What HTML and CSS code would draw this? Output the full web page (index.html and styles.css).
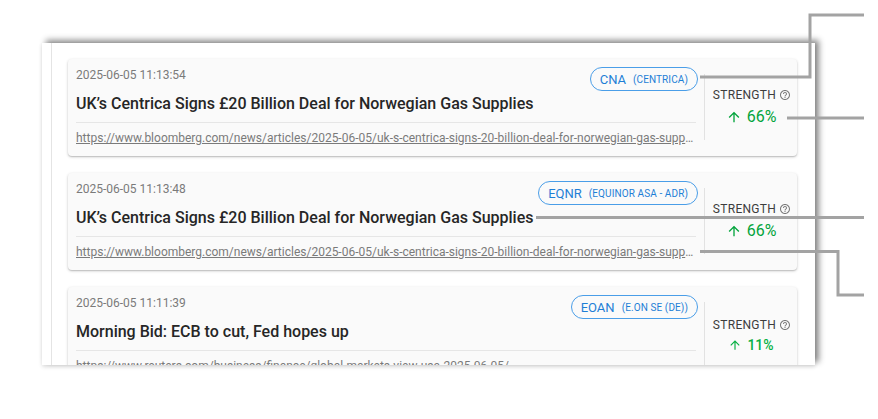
FILE: index.html
```html
<!DOCTYPE html>
<html>
<head>
<meta charset="utf-8">
<link rel="stylesheet" href="styles.css">
</head>
<body>
<div class="panel">
  <div class="list">
    <div class="card">
      <div class="main">
        <div class="head">
          <span class="date">2025-06-05 11:13:54</span>
          <span class="chip"><span class="sym">CNA</span><span class="name">(CENTRICA)</span></span>
        </div>
        <div class="title">UK’s Centrica Signs £20 Billion Deal for Norwegian Gas Supplies</div>
        <div class="url"><a href="#">https://www.bloomberg.com/news/articles/2025-06-05/uk-s-centrica-signs-20-billion-deal-for-norwegian-gas-supplies</a></div>
      </div>
      <div class="strength">
        <div class="label">STRENGTH <svg class="help" viewBox="0 0 24 24"><path d="M11 18h2v-2h-2v2zm1-16C6.48 2 2 6.48 2 12s4.48 10 10 10 10-4.48 10-10S17.52 2 12 2zm0 18c-4.41 0-8-3.59-8-8s3.59-8 8-8 8 3.59 8 8-3.59 8-8 8zm0-14c-2.21 0-4 1.79-4 4h2c0-1.1.9-2 2-2s2 .9 2 2c0 2-3 1.75-3 5h2c0-2.25 3-2.5 3-5 0-2.21-1.79-4-4-4z"/></svg></div>
        <div class="value big"><svg class="arrow" viewBox="0 0 24 24"><path d="M4 12l1.41 1.41L11 7.83V20h2V7.83l5.58 5.59L20 12l-8-8-8 8z"/></svg>66%</div>
      </div>
    </div>
    <div class="card">
      <div class="main">
        <div class="head">
          <span class="date">2025-06-05 11:13:48</span>
          <span class="chip"><span class="sym">EQNR</span><span class="name">(EQUINOR ASA - ADR)</span></span>
        </div>
        <div class="title">UK’s Centrica Signs £20 Billion Deal for Norwegian Gas Supplies</div>
        <div class="url"><a href="#">https://www.bloomberg.com/news/articles/2025-06-05/uk-s-centrica-signs-20-billion-deal-for-norwegian-gas-supplies</a></div>
      </div>
      <div class="strength">
        <div class="label">STRENGTH <svg class="help" viewBox="0 0 24 24"><path d="M11 18h2v-2h-2v2zm1-16C6.48 2 2 6.48 2 12s4.48 10 10 10 10-4.48 10-10S17.52 2 12 2zm0 18c-4.41 0-8-3.59-8-8s3.59-8 8-8 8 3.59 8 8-3.59 8-8 8zm0-14c-2.21 0-4 1.79-4 4h2c0-1.1.9-2 2-2s2 .9 2 2c0 2-3 1.75-3 5h2c0-2.25 3-2.5 3-5 0-2.21-1.79-4-4-4z"/></svg></div>
        <div class="value big"><svg class="arrow" viewBox="0 0 24 24"><path d="M4 12l1.41 1.41L11 7.83V20h2V7.83l5.58 5.59L20 12l-8-8-8 8z"/></svg>66%</div>
      </div>
    </div>
    <div class="card">
      <div class="main">
        <div class="head">
          <span class="date">2025-06-05 11:11:39</span>
          <span class="chip"><span class="sym">EOAN</span><span class="name">(E.ON SE (DE))</span></span>
        </div>
        <div class="title">Morning Bid: ECB to cut, Fed hopes up</div>
        <div class="url"><a href="#">https://www.reuters.com/business/finance/global-markets-view-usa-2025-06-05/</a></div>
      </div>
      <div class="strength">
        <div class="label">STRENGTH <svg class="help" viewBox="0 0 24 24"><path d="M11 18h2v-2h-2v2zm1-16C6.48 2 2 6.48 2 12s4.48 10 10 10 10-4.48 10-10S17.52 2 12 2zm0 18c-4.41 0-8-3.59-8-8s3.59-8 8-8 8 3.59 8 8-3.59 8-8 8zm0-14c-2.21 0-4 1.79-4 4h2c0-1.1.9-2 2-2s2 .9 2 2c0 2-3 1.75-3 5h2c0-2.25 3-2.5 3-5 0-2.21-1.79-4-4-4z"/></svg></div>
        <div class="value small"><svg class="arrow" viewBox="0 0 24 24"><path d="M4 12l1.41 1.41L11 7.83V20h2V7.83l5.58 5.59L20 12l-8-8-8 8z"/></svg>11%</div>
      </div>
    </div>
  </div>
</div>
<svg class="annot" width="878" height="419" viewBox="0 0 878 419">
  <polyline points="700,77 810,77 810,15 864,15"/>
  <polyline points="787,118 864,118"/>
  <polyline points="536,217.5 864,217.5"/>
  <polyline points="700,251.5 838,251.5 838,295 864,295"/>
</svg>
</body>
</html>
```

FILE: styles.css
```css
html, body {
  margin: 0;
  padding: 0;
  background: #ffffff;
  font-family: Roboto, "Liberation Sans", sans-serif;
}
body {
  width: 878px;
  height: 419px;
  overflow: hidden;
  position: relative;
}
.panel {
  margin: 43px 0 0 42px;
  width: 773px;
  height: 322px;
  overflow: hidden;
  background: #ffffff;
  box-shadow: 4px -3px 6px rgba(0,0,0,0.45), 0 2px 4px rgba(0,0,0,0.12);
}
.list {
  margin-left: 9px;
  border-left: 1px solid #e4e4e4;
  height: 100%;
  padding: 16px 18px 0 16px;
  box-sizing: border-box;
  display: flex;
  flex-direction: column;
  gap: 17px;
}
.card {
  flex: none;
  height: 97px;
  background: #fafafa;
  border-radius: 4px;
  box-shadow: 0 1px 3px rgba(0,0,0,0.22), 0 1px 1px rgba(0,0,0,0.1);
  display: flex;
}
.main {
  width: 636px;
  box-sizing: border-box;
  padding: 8px 6px 0 8px;
  min-width: 0;
}
.head {
  display: flex;
  justify-content: space-between;
  align-items: flex-start;
  height: 24px;
}
.date {
  font-size: 12px;
  line-height: 16px;
  color: #7a7a7a;
}
.chip {
  height: 24px;
  box-sizing: border-box;
  border: 1px solid #4a9ee8;
  border-radius: 12px;
  padding: 0 9px 0 9px;
  display: flex;
  align-items: center;
  gap: 7px;
  color: #1e7fd6;
  margin-right: 0;
}
.sym {
  font-size: 13px;
}
.name {
  font-size: 10px;
  font-weight: 400;
  letter-spacing: 0.1px;
}
.title {
  margin-top: 3px;
  font-size: 16px;
  line-height: 20px;
  font-weight: 500;
  color: #262626;
  padding-bottom: 8px;
  border-bottom: 1px solid #e6e6e6;
  margin-right: 2px;
  white-space: nowrap;
}
.url {
  padding-top: 7px;
  font-size: 12px;
  line-height: 16px;
  white-space: nowrap;
  overflow: hidden;
  text-overflow: ellipsis;
  color: #7a7a7a;
  margin-right: 4px;
}
.url a {
  color: #7a7a7a;
  text-decoration: underline;
}
.strength {
  flex: 1;
  margin: 15px 0 16px;
  border-left: 1px solid #e2e2e2;
  display: flex;
  flex-direction: column;
  align-items: center;
  justify-content: center;
  gap: 5px;
}
.label {
  font-size: 12px;
  color: #3d3d3d;
  letter-spacing: 0.3px;
  display: flex;
  align-items: center;
  gap: 3px;
  padding-left: 2px;
}
.help {
  width: 12px;
  height: 12px;
  fill: #7a7a7a;
}
.value {
  display: flex;
  align-items: center;
  color: #03a43c;
  gap: 5px;
}
.value.big {
  font-size: 16px;
  font-weight: 400;
}
.value.small {
  font-size: 14px;
  font-weight: 500;
  color: #07b043;
}
.arrow {
  width: 16px;
  height: 16px;
  fill: currentColor;
}
.value.small .arrow {
  width: 14px;
  height: 14px;
}
.annot {
  position: absolute;
  left: 0;
  top: 0;
  pointer-events: none;
}
.annot polyline {
  fill: none;
  stroke: #a3a3a3;
  stroke-width: 3;
}
```
